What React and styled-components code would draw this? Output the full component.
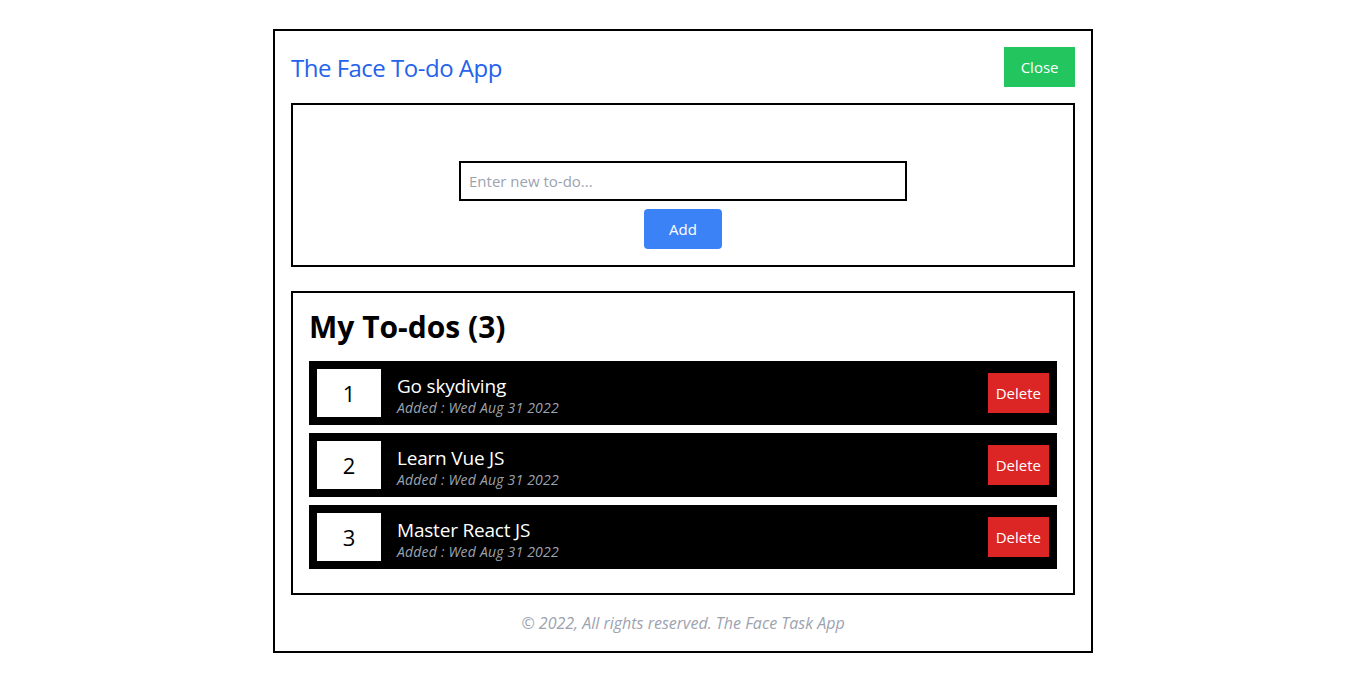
import React from "react";
import styled, { createGlobalStyle } from "styled-components";

const GlobalStyle = createGlobalStyle`
    * {
        box-sizing: border-box;
    }

    body {
        margin: 0;
        background: #ffffff;
        font-family: "Open Sans", "Noto Sans", sans-serif;
        color: #000000;
    }
`;

const Page = styled.div`
    padding-top: 29px;
    display: flex;
    justify-content: center;
`;

const Frame = styled.div`
    width: 820px;
    border: 2px solid #000000;
    padding: 16px;
    display: flex;
    flex-direction: column;
`;

const Header = styled.header`
    display: flex;
    justify-content: space-between;
    align-items: center;
    height: 40px;
    margin-bottom: 16px;
`;

const Title = styled.h1`
    margin: 0;
    font-size: 24px;
    font-weight: 400;
    color: #2563eb;
    letter-spacing: -0.5px;
`;

const Button = styled.button`
    height: 40px;
    padding: 0 ${(p) => p.$px || 16}px;
    border: none;
    border-radius: ${(p) => (p.$rounded ? "4px" : "0")};
    background: ${(p) => p.$bg};
    color: #ffffff;
    font-family: inherit;
    font-size: 15px;
    cursor: pointer;
`;

const Panel = styled.section`
    border: 2px solid #000000;
    padding: ${(p) => p.$padding};
    margin-bottom: ${(p) => p.$mb || 0}px;
`;

const Form = styled.form`
    display: flex;
    flex-direction: column;
    align-items: center;
    gap: 8px;
`;

const Input = styled.input`
    width: 448px;
    height: 40px;
    border: 2px solid #000000;
    padding: 0 8px;
    font-family: inherit;
    font-size: 15px;
    outline: none;

    &::placeholder {
        color: #9ca3af;
    }
`;

const Heading = styled.h2`
    margin: 0 0 16px;
    font-size: 30px;
    line-height: 36px;
    font-weight: 700;
`;

const Row = styled.div`
    display: flex;
    align-items: center;
    background: #000000;
    padding: 8px;
    margin-bottom: 8px;
`;

const Num = styled.div`
    width: 64px;
    height: 48px;
    background: #ffffff;
    display: flex;
    align-items: center;
    justify-content: center;
    font-size: 22px;
`;

const Info = styled.div`
    flex: 1;
    margin-left: 16px;
    padding-top: 4px;
    display: flex;
    flex-direction: column;
`;

const TaskName = styled.span`
    color: #ffffff;
    font-size: 19px;
    line-height: 24px;
    letter-spacing: -0.2px;
`;

const Added = styled.span`
    margin-top: 1px;
    color: #9ca3af;
    font-size: 14px;
    font-style: italic;
    line-height: 18px;
    letter-spacing: 0.2px;
`;

const Footer = styled.footer`
    margin-top: 16px;
    text-align: center;
    color: #9ca3af;
    font-style: italic;
    font-size: 16px;
    line-height: 24px;
`;

const todos = [
    { id: 1, text: "Go skydiving" },
    { id: 2, text: "Learn Vue JS" },
    { id: 3, text: "Master React JS" },
];

const App = () => {
    return (
        <>
            <GlobalStyle />
            <Page>
                <Frame>
                    <Header>
                        <Title>The Face To-do App</Title>
                        <Button $bg="#22c55e" $px={16.5}>
                            Close
                        </Button>
                    </Header>
                    <Panel $padding="56px 16px 16px" $mb={24}>
                        <Form onSubmit={(e) => e.preventDefault()}>
                            <Input placeholder="Enter new to-do..." />
                            <Button $bg="#3b82f6" $rounded $px={25}>
                                Add
                            </Button>
                        </Form>
                    </Panel>
                    <Panel $padding="16px 16px 16px">
                        <Heading>My To-dos ({todos.length})</Heading>
                        {todos.map((t) => (
                            <Row key={t.id}>
                                <Num>{t.id}</Num>
                                <Info>
                                    <TaskName>{t.text}</TaskName>
                                    <Added>Added : Wed Aug 31 2022</Added>
                                </Info>
                                <Button $bg="#dc2626" $px={8}>
                                    Delete
                                </Button>
                            </Row>
                        ))}
                    </Panel>
                    <Footer>© 2022, All rights reserved. The Face Task App</Footer>
                </Frame>
            </Page>
        </>
    );
};

export default App;
